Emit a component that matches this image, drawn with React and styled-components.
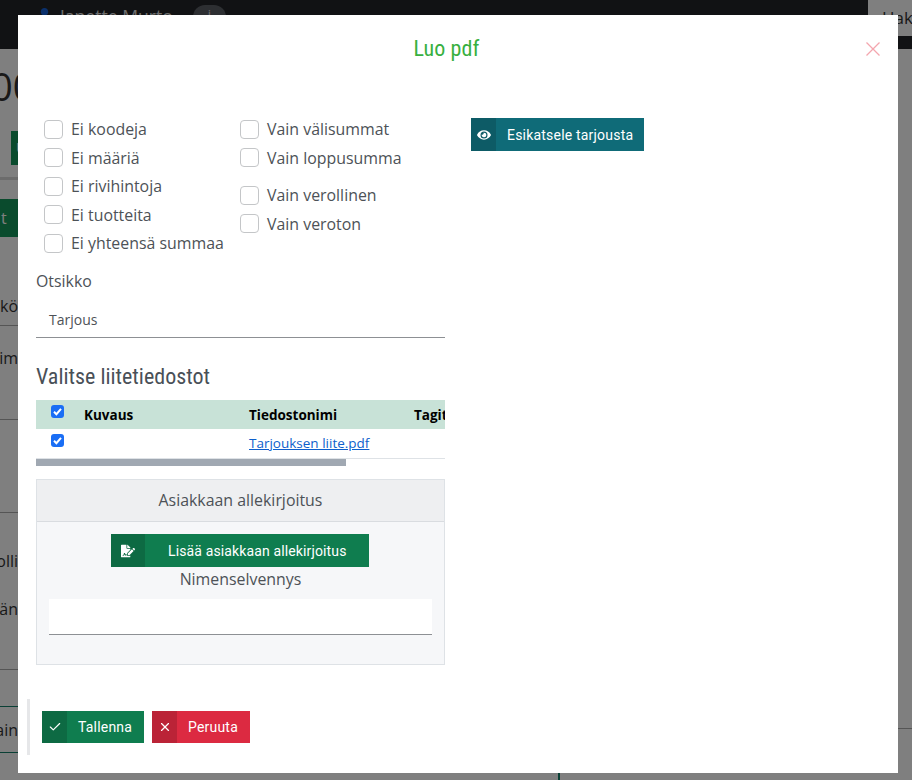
import React from "react";
import styled, { createGlobalStyle } from "styled-components";
import { FaEye, FaFileSignature, FaUser } from "react-icons/fa";
import { Check, X } from "lucide-react";

const Global = createGlobalStyle`
  html, body { margin: 0; padding: 0; height: 100%; background: #fff; }
  body { font-family: "Open Sans", "Noto Sans", sans-serif; color: #495057; }
  * { box-sizing: border-box; }
`;

/* ---------- page behind the dialog ---------- */
const Page = styled.div`
  height: 780px;
  overflow: hidden;
  background: #fff;
`;
const TopBar = styled.header`
  height: 49px;
  display: flex;
  align-items: flex-start;
  background: #222529;
  padding-left: 37px;
  color: #ddd;
`;
const UserIcon = styled(FaUser)`
  color: #1560d8;
  font-size: 15px;
  margin-top: 8px;
`;
const UserName = styled.span`
  margin-left: 8px;
  margin-top: 4px;
  font-size: 17.6px;
  line-height: 24px;
`;
const InfoPill = styled.span`
  margin-left: 20px;
  margin-top: 5px;
  width: 33px;
  height: 24px;
  border-radius: 12px;
  background: #5a5e64;
  font-size: 13px;
  text-align: center;
`;
const SearchTab = styled.div`
  margin-left: auto;
  width: 44px;
  height: 36px;
  padding: 6px 0 0 14px;
  background: #fff;
  color: #333;
  font-size: 17px;
  overflow: hidden;
`;
const PageBody = styled.main`
  display: grid;
  grid-template-columns: 558px 1fr;
  height: 731px;
`;
const LeftStrip = styled.div`
  width: 18px;
  display: flex;
  flex-direction: column;
`;
const BigNumber = styled.div`
  height: 75px;
  line-height: 75px;
  font-size: 38px;
  color: #333;
  white-space: nowrap;
  margin-left: -9px;
`;
const GreenTag = styled.div`
  margin: 7px 0 0 11px;
  height: 34px;
  width: 7px;
  padding-left: 5px;
  overflow: hidden;
  background: #14965a;
  color: #fff;
  font-size: 14px;
  line-height: 34px;
`;
const SoftRule = styled.div`
  height: 3px;
  margin-top: 12px;
  background: #d8d8d8;
`;
const GreenAction = styled.div`
  margin-top: 19px;
  height: 38px;
  background: #14965a;
  color: #fff;
  font-size: 16px;
  line-height: 38px;
  padding-left: 1px;
`;
const BackRow = styled.div`
  height: ${(p) => p.$h}px;
  padding-top: ${(p) => p.$top || 0}px;
  border-bottom: 1px solid ${(p) => (p.$teal ? "#14806a" : "#aaa")};
  display: flex;
  flex-direction: column;
  align-items: flex-end;
  font-size: 16px;
  line-height: 24px;
  color: #333;
  white-space: nowrap;
`;
const BackText = styled.span`
  margin-bottom: ${(p) => p.$gap || 0}px;
`;
const RightPane = styled.div`
  border-left: 2px solid #14806a;
  display: flex;
  justify-content: flex-end;
`;
const RightRow = styled.div`
  width: 14px;
  height: 680px;
  border-bottom: 1px solid #aaa;
`;

/* ---------- dialog ---------- */
const Overlay = styled.div`
  position: fixed;
  inset: 0;
  padding: 15px 14px 7px 18px;
  background: rgba(0, 0, 0, 0.5);
  display: flex;
`;
const Modal = styled.div`
  position: relative;
  flex: 1;
  background: #fff;
  display: flex;
  flex-direction: column;
`;
const ModalTitle = styled.h2`
  margin: 0;
  height: 100px;
  padding: 18px 23px 0 0;
  text-align: center;
  font-family: "Roboto Condensed", Roboto, sans-serif;
  font-stretch: condensed;
  font-weight: 400;
  font-size: 22px;
  line-height: 32px;
  letter-spacing: 0.1px;
  color: #38b03f;
`;
const CloseButton = styled.button`
  position: absolute;
  top: 27px;
  right: 18px;
  width: 14px;
  height: 14px;
  padding: 0;
  border: 0;
  background: none;
  color: #f4a6ae;
  svg { display: block; }
`;
const Columns = styled.div`
  display: grid;
  grid-template-columns: 409px 1fr;
  column-gap: 26px;
  padding-left: 18px;
`;
const LeftColumn = styled.div`
  display: flex;
  flex-direction: column;
`;
const OptionGrid = styled.div`
  display: grid;
  grid-template-columns: 196px 1fr;
  padding-left: 8px;
`;
const OptionGroup = styled.div`
  display: flex;
  flex-direction: column;
  margin-bottom: ${(p) => p.$gap || 0}px;
`;
const OptionRow = styled.label`
  height: 28.5px;
  display: flex;
  align-items: center;
  gap: 8px;
  font-size: 15.9px;
  line-height: 24px;
  color: #4d5257;
  white-space: nowrap;
`;
const Box = styled.input.attrs({ type: "checkbox" })`
  appearance: none;
  margin: 0;
  width: 19px;
  height: 19px;
  background: #fff;
  border: 1px solid #c4c6c8;
  border-radius: 4px;
  flex: none;
`;
const FieldLabel = styled.div`
  margin-top: 11px;
  font-size: 15.9px;
  line-height: 24px;
  color: #4d5257;
`;
const TextField = styled.div`
  margin-top: 9.5px;
  height: 36px;
  padding-left: 13px;
  border-bottom: 1px solid #8d9094;
  font-size: 14px;
  line-height: 35px;
  color: #4d5257;
`;
const SectionTitle = styled.h3`
  margin: 24px 0 0;
  font-family: "Roboto Condensed", Roboto, sans-serif;
  font-stretch: condensed;
  font-weight: 400;
  font-size: 22px;
  line-height: 30px;
  color: #495057;
`;
const TableScroll = styled.div`
  margin-top: 8px;
  overflow: hidden;
`;
const Table = styled.table`
  width: 540px;
  table-layout: fixed;
  border-collapse: separate;
  border-spacing: 0;
  font-size: 13.5px;
  color: #000;
`;
const HeadRow = styled.tr`
  height: 29px;
  background: #c8e2d7;
`;
const BodyRow = styled.tr`
  height: 30px;
`;
const HeadCell = styled.th`
  padding: 0 8px;
  text-align: left;
  font-weight: 700;
  width: ${(p) => p.$w}px;
`;
const Cell = styled.td`
  padding: 0 8px 2px;
  border-bottom: 1px solid #dee2e6;
`;
const CheckCell = styled.td`
  padding: 5px 0 0 15px;
  vertical-align: top;
  border-bottom: 1px solid #dee2e6;
`;
const HeadCheckCell = styled.th`
  padding: 5px 0 0 15px;
  vertical-align: top;
  width: 40px;
`;
const Tick = styled.span`
  display: block;
  width: 13px;
  height: 13px;
  border-radius: 3px;
  background: #1a6ef5;
  color: #fff;
  svg { display: block; }
`;
const FileLink = styled.a`
  color: #0d5fcc;
  text-decoration: underline;
`;
const ScrollThumb = styled.div`
  height: 7px;
  width: 310px;
  background: #a0a8b2;
`;
const Panel = styled.section`
  margin-top: 13px;
  height: 186px;
  background: #f6f7f9;
  border: 1px solid #dee2e6;
  display: flex;
  flex-direction: column;
  align-items: center;
`;
const PanelHeader = styled.div`
  align-self: stretch;
  height: 42px;
  background: #eeeff1;
  border-bottom: 1px solid #d9dce0;
  text-align: center;
  font-size: 15.9px;
  line-height: 41px;
  color: #4d5257;
`;
const PanelLabel = styled.div`
  font-size: 15.9px;
  line-height: 24px;
  color: #4d5257;
`;
const SignatureInput = styled.div`
  align-self: stretch;
  margin: 8px 12px 0;
  height: 36px;
  background: #fff;
  border-bottom: 1px solid #8d9094;
`;
const tones = {
  green: ["#0f7d4f", "#0d6a43"],
  teal: ["#0f6b78", "#0d5b66"],
  red: ["#dc2a41", "#bb2337"],
};
const Button = styled.button`
  margin: ${(p) => p.$margin || 0};
  width: ${(p) => p.$width}px;
  height: ${(p) => p.$height || 32}px;
  padding: 0;
  border: 0;
  display: inline-flex;
  align-items: stretch;
  background: ${(p) => tones[p.$tone][0]};
  color: #fff;
  font-family: Roboto, "Noto Sans", sans-serif;
  font-weight: 450;
  font-size: 14px;
  letter-spacing: 0.2px;
  flex: none;
`;
const ButtonIcon = styled.span`
  width: ${(p) => p.$w || 25}px;
  display: flex;
  align-items: center;
  justify-content: center;
  background: ${(p) => tones[p.$tone][1]};
`;
const ButtonText = styled.span`
  align-self: center;
  padding-left: ${(p) => p.$pad || 11}px;
  letter-spacing: ${(p) => p.$spacing || 0.2}px;
  white-space: nowrap;
`;
const Footer = styled.footer`
  margin: 34px 0 0 9px;
  height: 56px;
  padding: 12px;
  border-left: 3px solid #e6e7e9;
  display: flex;
  gap: 8px;
`;

const leftOptions = ["Ei koodeja", "Ei määriä", "Ei rivihintoja", "Ei tuotteita", "Ei yhteensä summaa"];

const Option = ({ children }) => (
  <OptionRow>
    <Box />
    {children}
  </OptionRow>
);

const CheckedBox = () => (
  <Tick>
    <svg width="13" height="13" viewBox="0 0 13 13" fill="none" stroke="currentColor" strokeWidth="2">
      <path d="M3 6.8 L5.4 9.2 L10 3.8" />
    </svg>
  </Tick>
);

export default function App() {
  return (
    <>
      <Global />
      <Page>
        <TopBar>
          <UserIcon />
          <UserName>Janette Murto</UserName>
          <InfoPill>i</InfoPill>
          <SearchTab>Haku</SearchTab>
        </TopBar>
        <PageBody>
          <LeftStrip>
            <BigNumber>00</BigNumber>
            <GreenTag>U</GreenTag>
            <SoftRule />
            <GreenAction>t</GreenAction>
            <BackRow $h={89} $top={57}><BackText>Työkö</BackText></BackRow>
            <BackRow $h={94} $top={20}><BackText>Toim</BackText></BackRow>
            <BackRow $h={93} />
            <BackRow $h={157} $top={36}>
              <BackText $gap={24}>Kolli</BackText>
              <BackText>Tän</BackText>
            </BackRow>
            <BackRow $h={37} $teal />
            <BackRow $h={46} $top={11} $teal><BackText>Vain</BackText></BackRow>
          </LeftStrip>
          <RightPane>
            <RightRow />
          </RightPane>
        </PageBody>
      </Page>

      <Overlay>
        <Modal>
          <ModalTitle>Luo pdf</ModalTitle>
          <CloseButton aria-label="Sulje">
            <svg width="14" height="14" viewBox="0 0 14 14" stroke="currentColor" strokeWidth="1.3">
              <path d="M0.5 0.5 L13.5 13.5 M13.5 0.5 L0.5 13.5" />
            </svg>
          </CloseButton>
          <Columns>
            <LeftColumn>
              <OptionGrid>
                <OptionGroup>
                  {leftOptions.map((o) => (
                    <Option key={o}>{o}</Option>
                  ))}
                </OptionGroup>
                <div>
                  <OptionGroup $gap={9}>
                    <Option>Vain välisummat</Option>
                    <Option>Vain loppusumma</Option>
                  </OptionGroup>
                  <OptionGroup>
                    <Option>Vain verollinen</Option>
                    <Option>Vain veroton</Option>
                  </OptionGroup>
                </div>
              </OptionGrid>
              <FieldLabel>Otsikko</FieldLabel>
              <TextField>Tarjous</TextField>
              <SectionTitle>Valitse liitetiedostot</SectionTitle>
              <TableScroll>
                <Table>
                  <thead>
                    <HeadRow>
                      <HeadCheckCell><CheckedBox /></HeadCheckCell>
                      <HeadCell $w={165}>Kuvaus</HeadCell>
                      <HeadCell $w={165}>Tiedostonimi</HeadCell>
                      <HeadCell $w={170}>Tagit</HeadCell>
                    </HeadRow>
                  </thead>
                  <tbody>
                    <BodyRow>
                      <CheckCell><CheckedBox /></CheckCell>
                      <Cell />
                      <Cell><FileLink href="#">Tarjouksen liite.pdf</FileLink></Cell>
                      <Cell />
                    </BodyRow>
                  </tbody>
                </Table>
              </TableScroll>
              <ScrollThumb />
              <Panel>
                <PanelHeader>Asiakkaan allekirjoitus</PanelHeader>
                <Button $tone="green" $height={33} $width={258} $margin="12px 1px 0 0">
                  <ButtonIcon $tone="green" $w={34}><FaFileSignature size={14} /></ButtonIcon>
                  <ButtonText $pad={23} $spacing={0.13}>Lisää asiakkaan allekirjoitus</ButtonText>
                </Button>
                <PanelLabel>Nimenselvennys</PanelLabel>
                <SignatureInput />
              </Panel>
            </LeftColumn>
            <div>
              <Button $tone="teal" $height={33} $width={173} $margin="3px 0 0">
                <ButtonIcon $tone="teal"><FaEye size={14} /></ButtonIcon>
                <ButtonText>Esikatsele tarjousta</ButtonText>
              </Button>
            </div>
          </Columns>
          <Footer>
            <Button $tone="green" $width={102}>
              <ButtonIcon $tone="green"><Check size={14} strokeWidth={2} /></ButtonIcon>
              <ButtonText>Tallenna</ButtonText>
            </Button>
            <Button $tone="red" $width={98}>
              <ButtonIcon $tone="red"><X size={14} strokeWidth={2} /></ButtonIcon>
              <ButtonText>Peruuta</ButtonText>
            </Button>
          </Footer>
        </Modal>
      </Overlay>
    </>
  );
}
